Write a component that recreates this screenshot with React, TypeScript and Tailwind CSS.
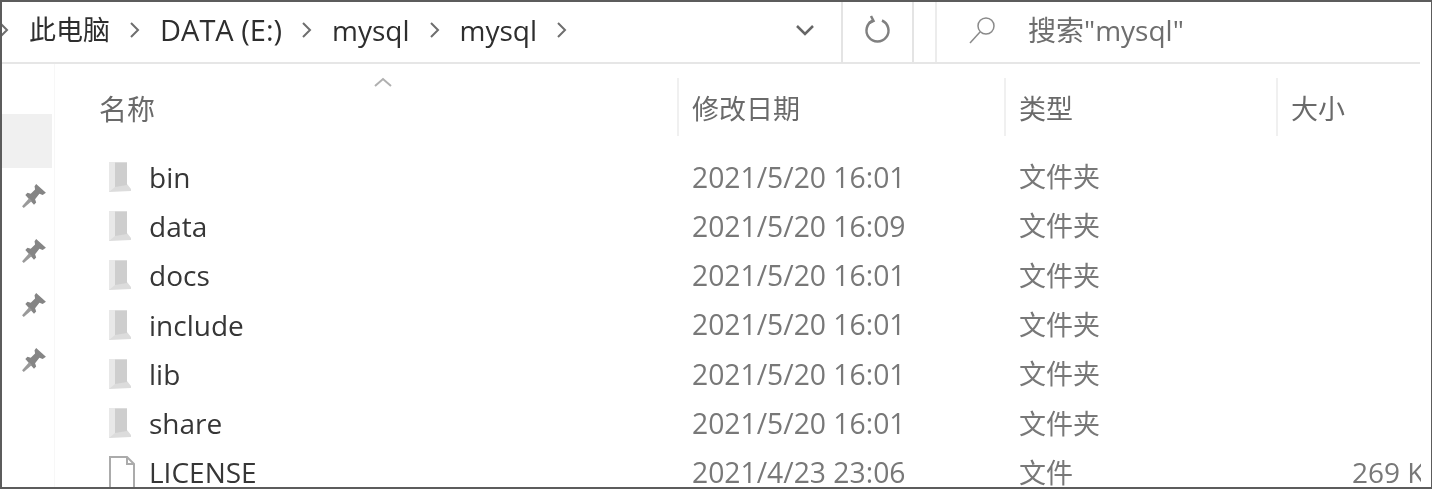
const rows = [
  { name: "bin", date: "2021/5/20 16:01", type: "文件夹" },
  { name: "data", date: "2021/5/20 16:09", type: "文件夹" },
  { name: "docs", date: "2021/5/20 16:01", type: "文件夹" },
  { name: "include", date: "2021/5/20 16:01", type: "文件夹" },
  { name: "lib", date: "2021/5/20 16:01", type: "文件夹" },
  { name: "share", date: "2021/5/20 16:01", type: "文件夹" },
  { name: "LICENSE", date: "2021/4/23 23:06", type: "文件", size: "269 KB" },
];

function Chevron() {
  return (
    <svg width="12" height="18" viewBox="0 0 12 18" fill="none" stroke="#6e6e6e" strokeWidth="2">
      <path d="M2 2l7 7-7 7" />
    </svg>
  );
}

function Pin() {
  return (
    <svg width="26" height="26" viewBox="0 0 24 24" fill="#858585">
      <path d="M14 1l9 8-3 2-3-1-4 5 1 3-2 2-8-9 2-2 3 1 4-4-.500-3z" />
      <path d="M7.500 14l2.500 2.500-7.500 6.500-1.500-1.500z" fill="#9a9a9a" />
    </svg>
  );
}

function FolderIcon() {
  return (
    <svg width="24" height="32" viewBox="0 0 24 32" className="shrink-0 blur-[0.5px]">
      <path d="M1 1h18v22l4 5v2l-22 1z" fill="#dcdcdc" />
      <path d="M1 1h6v25l-6 5z" fill="#e8e8e8" />
      <path d="M7 2h12v22l-12 2z" fill="#cecece" />
    </svg>
  );
}

function FileIcon() {
  return (
    <svg width="28" height="34" viewBox="0 0 28 34" fill="#fff" stroke="#ababab" strokeWidth="2" className="shrink-0">
      <path d="M2 2h17l7 7v24H2z" />
      <path d="M19 2v7h7" fill="none" />
    </svg>
  );
}

export default function App() {
  return (
    <div className="w-[1432px] h-[489px] overflow-hidden bg-white border-y-2 border-l-2 border-r border-[#5c5c5c] font-['Open_Sans','Noto_Sans_CJK_SC',sans-serif]">
      <div className="blur-[0.5px] h-full">
        <div className="flex h-[62px] border-b-2 border-[#e6e6e6] mr-[11px]">
          <div className="flex w-[912px] items-center border-r-2 border-[#e4e4e4] pb-[4px]">
            <div className="flex flex-1 items-center text-[28px] text-[#2e2e2e]">
              <div className="w-[31px] -ml-[4px]">
                <Chevron />
              </div>
              <span className="text-[27px]">此电脑</span>
              <div className="mx-[19px]"><Chevron /></div>
              <span className="text-[29px]">DATA (E:)</span>
              <div className="mx-[19px]"><Chevron /></div>
              <span>mysql</span>
              <div className="mx-[19px]"><Chevron /></div>
              <span>mysql</span>
              <div className="ml-[19px]"><Chevron /></div>
            </div>
            <div className="flex w-[70px] justify-center pr-[2px]">
              <svg width="20" height="12" viewBox="0 0 20 12" fill="none" stroke="#666" strokeWidth="2.500">
                <path d="M2 2l8 8 8-8" />
              </svg>
            </div>
            <div className="flex h-[62px] -mb-[4px] pb-[4px] w-[71px] items-center justify-center border-l-2 border-[#e4e4e4]">
              <svg width="28" height="30" viewBox="0 0 28 30" fill="none" stroke="#808080" strokeWidth="2.500">
                <path d="M9 5.500a11 11 0 1 0 9 0" />
                <path d="M7 1l2.500 5L5 8" />
              </svg>
            </div>
          </div>
          <div className="flex flex-1 items-center ml-[21px] border-l-2 border-[#ececec] pb-[4px] text-[28px] text-[#6e6e6e]">
            <svg width="30" height="30" viewBox="0 0 30 30" fill="none" stroke="#8a8a8a" strokeWidth="1.500" className="ml-[30px]">
              <circle cx="19" cy="11" r="8" />
              <path d="M13 17L3 28" />
            </svg>
            <span className="ml-[31px] whitespace-nowrap">搜索"mysql"</span>
          </div>
        </div>
        <div className="flex h-[423px]">
          <div className="flex w-[53px] flex-col border-r border-[#f7f7f7]">
            <div className="mt-[50px] mr-[2px] h-[54px] bg-[#f0f0f0]" />
            <div className="flex flex-col items-center gap-[28.500px] pl-[12px] pt-[15px]">
              <Pin />
              <Pin />
              <Pin />
              <Pin />
            </div>
          </div>
          <div className="flex-1 min-w-0 overflow-hidden">
            <div className="flex h-[88px] pt-[14px] text-[27px] leading-[40px] text-[#6a6a6a]">
              <div className="relative w-[624px] pl-[44px] pt-[11px] border-r-2 border-[#f0f0f0] h-[58px]">
                <span className="text-[28px]">名称</span>
                <svg width="20" height="10" viewBox="0 0 20 10" fill="none" stroke="#b0b0b0" strokeWidth="2" className="absolute left-[318px] top-[-1px]">
                  <path d="M2 9l8-7 8 7" />
                </svg>
              </div>
              <div className="w-[327px] pl-[13px] pt-[11px] border-r-2 border-[#f0f0f0] h-[58px]">修改日期</div>
              <div className="w-[272px] pl-[13px] pt-[11px] border-r-2 border-[#f0f0f0] h-[58px]">类型</div>
              <div className="pl-[13px] pt-[11px]">大小</div>
            </div>
            <div className="flex flex-col mr-[10px]">
              {rows.map((row) => (
                <div key={row.name} className="flex h-[49.300px] items-center text-[28px] leading-none text-[#787878]">
                  <div className="flex w-[637px] items-center pl-[53px] text-[#363636]">
                    {row.size ? <FileIcon /> : <FolderIcon />}
                    <span className={row.size ? "ml-[13px]" : "ml-[17px]"}>{row.name}</span>
                  </div>
                  <div className="w-[327px] whitespace-nowrap text-[28.300px]">{row.date}</div>
                  <div className="w-[333px] text-[27px]">{row.type}</div>
                  <div className="w-[69px] overflow-hidden whitespace-nowrap">{row.size}</div>
                </div>
              ))}
            </div>
          </div>
        </div>
      </div>
    </div>
  );
}
